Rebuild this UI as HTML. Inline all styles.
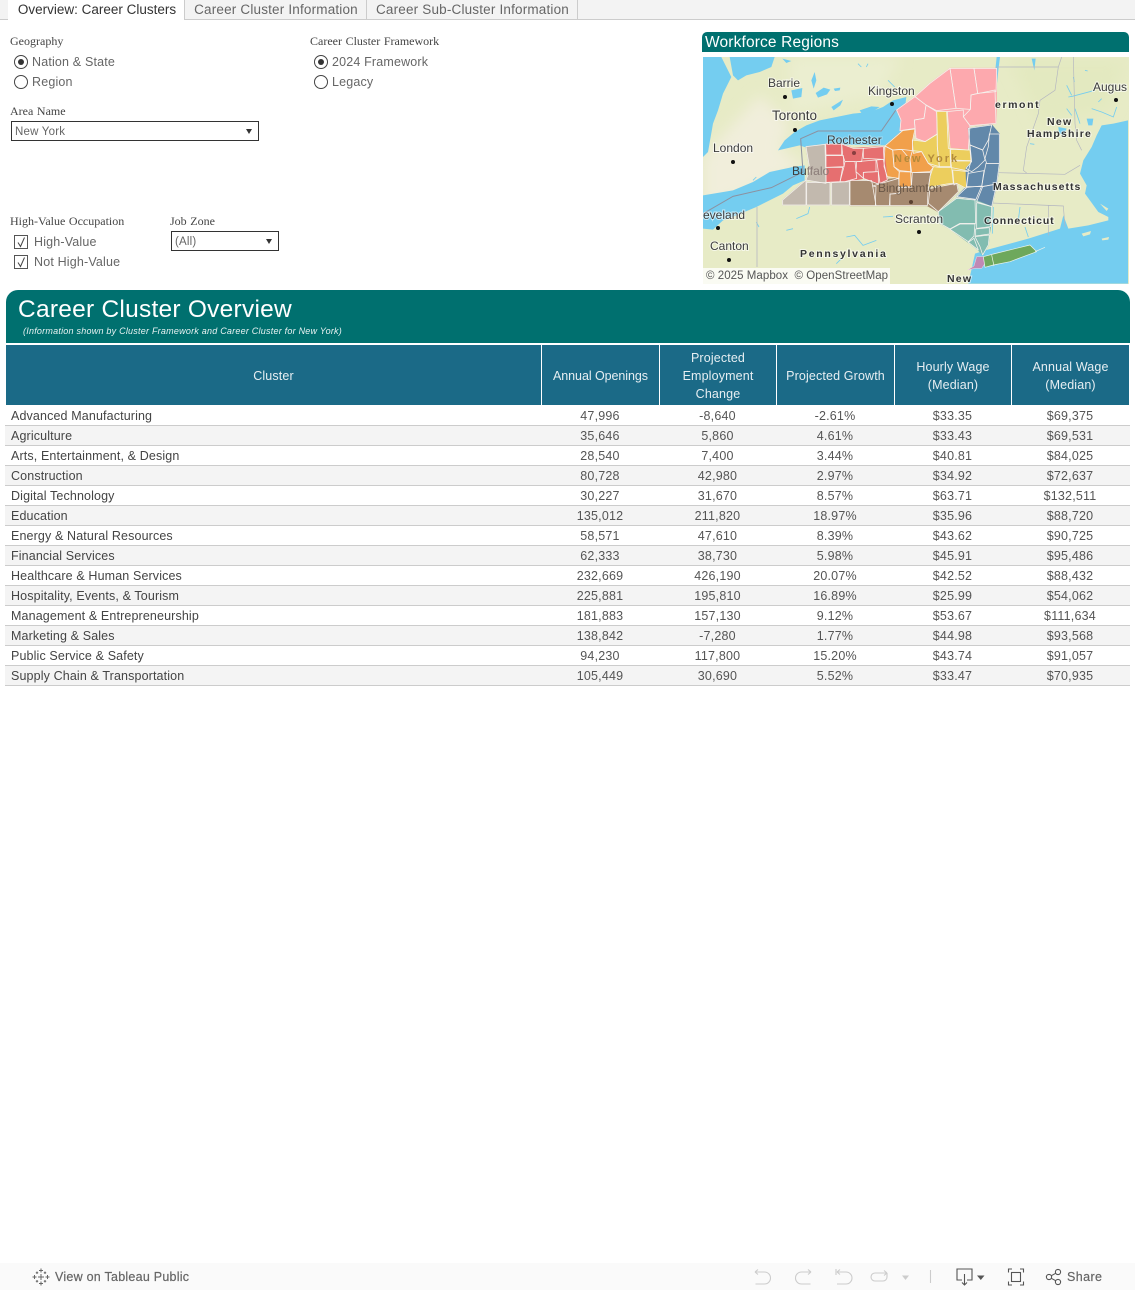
<!DOCTYPE html>
<html><head><meta charset="utf-8"><style>
html,body{margin:0;padding:0;background:#fff}
body{width:1135px;height:1290px;position:relative;overflow:hidden;font-family:"Liberation Sans",sans-serif;color:#555}
.a{position:absolute;white-space:nowrap}
.tab{position:absolute;top:0;height:19px;line-height:19px;font-size:13.5px;color:#666;letter-spacing:.18px;text-align:center;border-right:1px solid #ccc}
.lab{position:absolute;white-space:nowrap;font-family:"Liberation Serif",serif;font-size:12px;color:#444;word-spacing:.6px}
.opt{position:absolute;white-space:nowrap;font-size:12.5px;color:#666;letter-spacing:.17px;line-height:16px}
.radio{position:absolute;width:12px;height:12px;border:1px solid #444;border-radius:50%;background:#fff}
.radio.on::after{content:"";position:absolute;left:3px;top:3px;width:6px;height:6px;border-radius:50%;background:#333}
.check{position:absolute;width:12px;height:12px;border:1px solid #555;background:#fff}
.sel{position:absolute;border:1px solid #333;background:#fff;font-size:11.5px;color:#666;line-height:20px;padding-left:3px;letter-spacing:.2px;box-sizing:border-box;height:20px}
.sel::after{content:"";position:absolute;right:6px;top:7px;border-left:3.5px solid transparent;border-right:3.5px solid transparent;border-top:5px solid #333}
.hc{position:absolute;top:345px;height:60px;padding-top:2px;box-sizing:border-box;background:#1b6a87;color:#e6eef2;font-size:12.5px;letter-spacing:.14px;line-height:18px;text-align:center;display:flex;align-items:center;justify-content:center}
.row{position:absolute;left:5px;width:1125px;height:20px;border-bottom:1px solid #ccc;box-sizing:border-box;font-size:12.5px;line-height:20px;color:#555;letter-spacing:.2px}
.row.e{background:#f4f4f4}
.row span{position:absolute;text-align:center;top:0}
.row .n{left:6px;color:#444;text-align:left;white-space:nowrap;letter-spacing:.13px}
.c1{left:536px;width:118px}.c2{left:654px;width:117px}.c3{left:771px;width:118px}.c4{left:889px;width:117px}.c5{left:1006px;width:118px}
.m{font-family:"Liberation Sans",sans-serif;font-size:12px;fill:#3c3c3c;paint-order:stroke;stroke:#fff;stroke-width:2px;stroke-opacity:.6}
.s{font-family:"Liberation Sans",sans-serif;font-size:10.5px;font-weight:bold;fill:#333;paint-order:stroke;stroke:#fff;stroke-width:2px;stroke-opacity:.6}
</style></head><body>

<div class="a" style="left:0;top:0;width:1135px;height:19px;background:#f3f3f3;border-bottom:1px solid #ccc"></div>
<div class="tab" style="left:8px;width:176px;background:#fff;height:20px;color:#333;letter-spacing:0;text-indent:2px">Overview: Career Clusters</div>
<div class="tab" style="left:185px;width:181px;text-indent:1px">Career Cluster Information</div>
<div class="tab" style="left:367px;width:210px;text-indent:1px">Career Sub-Cluster Information</div>

<div class="lab" style="left:10px;top:34px">Geography</div>
<div class="radio on" style="left:14px;top:55px"></div><div class="opt" style="left:32px;top:54px">Nation &amp; State</div>
<div class="radio" style="left:14px;top:75px"></div><div class="opt" style="left:32px;top:74px">Region</div>
<div class="lab" style="left:310px;top:34px">Career Cluster Framework</div>
<div class="radio on" style="left:314px;top:55px"></div><div class="opt" style="left:332px;top:54px">2024 Framework</div>
<div class="radio" style="left:314px;top:75px"></div><div class="opt" style="left:332px;top:74px">Legacy</div>
<div class="lab" style="left:10px;top:104px">Area Name</div>
<div class="sel" style="left:11px;top:121px;width:248px">New York</div>
<div class="lab" style="left:10px;top:214px">High-Value Occupation</div>
<div class="lab" style="left:170px;top:214px">Job Zone</div>
<div class="check" style="left:14px;top:235px"><svg width="12" height="12" style="display:block"><path d="M3 6.5L5.5 10.5L9.5 1.500" fill="none" stroke="#444"/></svg></div><div class="opt" style="left:34px;top:234px">High-Value</div>
<div class="check" style="left:14px;top:255px"><svg width="12" height="12" style="display:block"><path d="M3 6.5L5.5 10.5L9.5 1.500" fill="none" stroke="#444"/></svg></div><div class="opt" style="left:34px;top:254px">Not High-Value</div>
<div class="sel" style="left:171px;top:231px;width:108px">(All)</div>

<div class="a" style="left:702px;top:32px;width:427px;height:20px;background:#00706f;border-radius:5px 5px 0 0;color:#fff;font-size:15.500px;line-height:21px;letter-spacing:.15px;text-indent:3px">Workforce Regions</div>

<svg class="a" style="left:703px;top:57px" width="426" height="227" viewBox="703 57 426 227">
<defs>
<filter id="b" x="-20%" y="-20%" width="140%" height="140%"><feGaussianBlur stdDeviation="7"/></filter>
<g id="pk"><polygon points="290,150 345,110 378,135 372,175 343,180 345,205 300,212 303,180"/><polygon points="378,135 410,155 412,222 375,245 348,235 343,180 372,175"/><polygon points="345,110 390,70 450,25 468,145 410,152 378,135"/><polygon points="450,25 522,25 533,100 513,105 511,148 468,145"/><polygon points="522,25 590,25 588,95 533,100"/><polygon points="513,105 585,90 588,190 510,197 490,170 511,148"/><polygon points="440,155 490,150 490,170 510,197 505,270 445,265"/></g>
<g id="yl"><polygon points="410,155 442,155 450,265 452,320 418,320 412,260"/><polygon points="337,240 375,245 412,222 412,260 418,320 385,310 365,275 340,280"/><polygon points="452,268 510,270 513,302 452,300"/><polygon points="452,303 513,303 505,333 455,323"/><polygon points="400,320 418,322 455,322 460,370 440,372 385,382 390,350"/><polygon points="458,330 505,335 498,385 470,370 462,375"/></g>
<g id="or"><polygon points="255,258 308,212 345,207 338,240 337,272 305,268 278,270 262,262"/><polygon points="255,258 278,270 282,320 298,335 296,355 262,350 252,320"/><polygon points="278,270 305,268 330,298 332,335 300,332 282,320"/><polygon points="337,272 365,275 385,310 400,322 390,335 335,338 330,298"/><polygon points="298,335 332,336 334,380 296,382"/></g>
<g id="br"><polygon points="150,362 215,362 218,378 228,380 226,437 150,437"/><polygon points="218,378 296,355 298,400 270,402 268,437 228,437"/><polygon points="296,383 334,382 337,338 392,338 384,395 382,437 270,437 270,402 298,400"/><polygon points="390,385 470,370 475,395 415,455 385,430"/></g>
<g id="rd"><polygon points="77,252 125,252 125,285 78,285"/><polygon points="125,252 160,265 190,265 185,305 135,305 128,285"/><polygon points="190,265 250,260 252,298 190,295"/><polygon points="78,287 130,287 132,320 78,322"/><polygon points="78,322 128,322 120,365 78,367"/><polygon points="135,305 165,305 170,355 135,365 120,365 132,320"/><polygon points="170,305 228,300 228,335 190,337 190,355 168,335"/><polygon points="190,337 235,335 235,372 190,355"/><polygon points="230,300 250,298 262,360 240,370"/></g>
<g id="gy"><polygon points="18,260 75,253 78,370 18,360 30,330"/><polygon points="-52,435 -52,420 18,360 18,435"/><polygon points="20,368 90,368 90,435 20,435"/><polygon points="95,368 148,365 148,435 95,435"/></g>
<g id="bl"><polygon points="505,205 575,195 565,240 548,270 510,255"/><polygon points="568,222 598,222 598,310 560,310 555,295 565,260"/><polygon points="510,255 548,270 555,300 535,320 515,335 498,325 515,305"/><polygon points="558,310 598,310 590,372 545,380 552,340"/><polygon points="505,340 552,332 545,380 500,380"/><polygon points="500,382 545,378 528,418 470,410"/><polygon points="548,380 590,372 575,440 530,425"/></g>
<g id="te"><polygon points="415,455 470,415 525,420 527,490 480,490 450,507 420,490"/><polygon points="530,428 575,440 572,500 530,505"/><polygon points="527,507 568,503 568,522 527,528"/><polygon points="450,508 480,492 525,492 522,528 505,545"/><polygon points="525,530 568,525 565,555 548,585 540,560"/><polygon points="505,547 522,535 535,570"/></g>
</defs>
<rect x="703" y="57" width="426" height="227" fill="#e7ebc6"/>

<g filter="url(#b)">
<polygon points="703,157 760,95 790,125 780,150 806,165 720,205 703,205" fill="#f1eedb"/>
<polygon points="790,57 900,57 880,95 790,115" fill="#ebeed0"/>
<polygon points="1010,60 1125,60 1110,110 1040,125" fill="#e3e9c0"/>
</g>

<g transform="translate(703,57) scale(.33333)">
<g fill="#74cdf0">
<polygon points="0,0 55,0 85,60 60,110 45,160 30,200 15,285 0,300"/>
<polygon points="80,0 215,0 205,30 170,45 130,55 105,70 90,55"/>
<polygon points="225,280 245,250 275,225 310,205 350,190 400,180 450,170 500,165 540,150 570,130 610,120 600,200 590,240 545,265 370,262 310,272 290,265"/>
<polygon points="0,415 90,400 150,375 200,345 270,330 305,325 305,370 270,385 240,410 160,450 100,475 60,490 30,518 0,515"/>
<polygon points="265,100 298,93 295,120 270,125"/>
<polygon points="338,108 362,92 382,98 372,112 345,122"/>
<polygon points="392,95 412,92 410,100 396,102"/>
<polygon points="385,150 420,128 412,145 392,160"/>
<polygon points="325,70 335,45 340,70 332,95"/>
<polygon points="470,160 505,148 530,150 500,170 478,172"/>
<polygon points="238,5 265,12 250,18"/>
</g>
<g fill="none" stroke="#74cdf0" stroke-width="2.500">
<path d="M280 485L315 470L320 450M250 520L270 515M160 495L168 510M430 540L455 535L480 565L520 550M540 480L570 478M465 20L475 30M555 70L575 90M495 20L490 30M420 600L400 620M160 360L150 370"/>
</g>
<path d="M0 470L90 418L205 392L300 345L293 245L345 222L535 222L578 160" fill="none" stroke="#8c91a0" stroke-width="3"/>
<path d="M162 450V630" fill="none" stroke="#b8bac0" stroke-width="2.500"/>
</g>

<g transform="translate(985,57) scale(.33333)">
<polygon points="429,190 385,200 350,205 335,235 320,270 295,310 285,350 305,385 300,410 340,465 370,480 370,490 310,505 250,515 235,475 225,515 130,545 0,580 -30,590 -50,680 429,680" fill="#74cdf0"/>
<polygon points="290,530 318,522 315,532 295,538" fill="#e7ebc6"/>
<polygon points="350,545 372,540 370,548 352,550" fill="#e7ebc6"/>
<polygon points="345,440 370,455 365,462" fill="#e7ebc6"/>
<g fill="#74cdf0">
<polygon points="35,0 45,0 40,40 35,90 25,95"/>
<polygon points="140,5 152,5 148,40"/>
<polygon points="305,185 325,185 322,205 310,205"/>
<polygon points="220,210 245,215 235,235 222,228"/>
</g>
<g fill="none" stroke="#74cdf0" stroke-width="2.500">
<path d="M250 120L262 118L330 100M245 85L260 115M245 155L260 175M270 155L285 200M320 155L350 165L385 180L395 150M340 135L350 125M300 40L308 42M265 60L268 75M105 450L100 490M120 510L130 540M135 260L148 262M25 450L22 530"/>
</g>
<path d="M35 30H220L230 0M265 0L270 200L275 250L290 280M220 30L210 100L165 130L160 170L125 270L115 340L125 348M40 347L240 352L285 325M20 438L235 447L240 510M190 445V535" fill="none" stroke="#b4b6c0" stroke-width="2"/>
</g>

<g transform="translate(800,60) scale(.33333)" stroke-linejoin="round">
<g stroke-width="3">
<polygon fill="#fda9ae" stroke="#fda9ae" points="290,150 345,110 390,70 450,25 590,25 588,190 510,197 505,270 445,265 442,155 410,155 412,222 375,245 348,235 345,205 300,212 303,180"/>
<polygon fill="#ecce5d" stroke="#ecce5d" points="337,240 375,245 412,222 410,155 442,155 450,265 510,270 513,302 505,333 498,385 470,370 385,382 390,350 400,320 385,310 365,275 340,280"/>
<polygon fill="#f1a04b" stroke="#f1a04b" points="255,258 308,212 345,207 338,240 340,280 365,275 385,310 400,322 390,335 335,338 334,380 296,382 296,355 262,350 252,320"/>
<polygon fill="#a68a70" stroke="#a68a70" points="150,362 215,362 296,355 296,383 334,382 337,338 392,338 384,390 470,370 475,395 415,455 382,437 150,437"/>
<polygon fill="#e66f70" stroke="#e66f70" points="77,252 125,252 160,265 250,260 262,360 240,370 190,355 135,365 78,367"/>
<polygon fill="#6288aa" stroke="#6288aa" points="505,205 575,195 598,222 598,310 590,372 575,440 530,425 528,418 470,410 500,380 498,325 515,305 510,255"/>
<polygon fill="#82bcb0" stroke="#82bcb0" points="415,455 470,415 525,420 575,440 572,500 568,522 565,555 548,585 535,570 505,547 450,507 420,490"/>
</g>
<use href="#gy" fill="#c2b9ae" stroke="#c2b9ae" stroke-width="3"/>
<g fill="none" stroke="#f5f2ee" stroke-width="2.300">
<use href="#pk"/><use href="#yl"/><use href="#or"/><use href="#br"/><use href="#rd"/><use href="#gy"/><use href="#bl"/><use href="#te"/>
</g>
<polygon fill="#c089b4" stroke="#f0d8e4" stroke-width="1.500" points="503,630 522,618 530,590 550,590 555,610 545,625 525,625"/>
<polygon fill="#6ea85c" stroke="#eef4ea" stroke-width="2" points="550,590 580,582 690,555 710,575 630,605 580,615 555,622"/>
<path d="M575 585L582 618" stroke="#eef4ea" stroke-width="2"/>
<path d="M705 575L735 562" stroke="#f0f3e8" stroke-width="2"/>
</g>

<g fill="#111">
<circle cx="785" cy="97" r="2"/><circle cx="892" cy="104" r="2"/><circle cx="795" cy="130" r="2"/><circle cx="733" cy="162" r="2"/><circle cx="718" cy="228" r="2"/><circle cx="729" cy="260" r="2"/><circle cx="919" cy="232" r="2"/><circle cx="1116" cy="100" r="2"/>
<circle cx="854" cy="153" r="2" fill="#8a3f40"/><circle cx="911" cy="202" r="2" fill="#5a4030"/>
</g>
<text class="m" x="768" y="87">Barrie</text>
<text class="m" x="868" y="95">Kingston</text>
<text class="m" x="772" y="120" style="font-size:13.500px">Toronto</text>
<text class="m" x="713" y="152">London</text>
<text class="m" x="827" y="144" style="stroke-opacity:.3">Rochester</text>
<text class="m" x="792" y="175" style="stroke:none">Bu<tspan fill="#8a7c78">ffalo</tspan></text>
<text class="m" x="878" y="192" style="stroke:none;fill:#6a5848">Binghamton</text>
<text class="m" x="895" y="223">Scranton</text>
<text class="m" x="703" y="219">eveland</text>
<text class="m" x="710" y="250">Canton</text>
<text class="m" x="1093" y="91">Augus</text>
<text class="s" x="894" y="162" style="stroke:none;fill:#b28a3c;letter-spacing:2px;font-size:11px">New York</text>
<text class="s" x="800" y="257" style="letter-spacing:1.700px">Pennsylvania</text>
<text class="s" x="995" y="108" style="letter-spacing:1.600px">ermont</text>
<text class="s" x="1047" y="125" style="letter-spacing:1.300px">New</text>
<text class="s" x="1027" y="137" style="letter-spacing:1.200px">Hampshire</text>
<text class="s" x="993" y="190" style="letter-spacing:1px">Massachusetts</text>
<text class="s" x="984" y="224" style="letter-spacing:.9px">Connecticut</text>
<text class="s" x="947" y="282" style="letter-spacing:1.200px">New</text>
<rect x="703" y="268" width="187" height="16" fill="#fff" opacity=".78"/>
<text x="706" y="279" font-family="Liberation Sans" font-size="11.500" fill="#555" letter-spacing=".05" xml:space="preserve">© 2025 Mapbox  © OpenStreetMap</text>
</svg>

<div class="a" style="left:6px;top:290px;width:1124px;height:53px;background:#00706f;border-radius:12px 12px 0 0"></div>
<div class="a" style="left:18px;top:295px;color:#fff;font-size:24.500px;line-height:30px;letter-spacing:.25px">Career Cluster Overview</div>
<div class="a" style="left:23px;top:325px;color:#e8f2f2;font-size:9px;font-style:italic;line-height:12px;letter-spacing:.23px">(Information shown by Cluster Framework and Career Cluster for New York)</div>

<div class="hc" style="left:6px;width:535px">Cluster</div>
<div class="hc" style="left:542px;width:117px;letter-spacing:-.06px">Annual Openings</div>
<div class="hc" style="left:660px;width:116px">Projected<br>Employment<br>Change</div>
<div class="hc" style="left:777px;width:117px">Projected Growth</div>
<div class="hc" style="left:895px;width:116px">Hourly Wage<br>(Median)</div>
<div class="hc" style="left:1012px;width:117px">Annual Wage<br>(Median)</div>

<div class="row" style="top:406px"><span class="n">Advanced Manufacturing</span><span class="c1">47,996</span><span class="c2">-8,640</span><span class="c3">-2.61%</span><span class="c4">$33.35</span><span class="c5">$69,375</span></div>
<div class="row e" style="top:426px"><span class="n">Agriculture</span><span class="c1">35,646</span><span class="c2">5,860</span><span class="c3">4.61%</span><span class="c4">$33.43</span><span class="c5">$69,531</span></div>
<div class="row" style="top:446px"><span class="n">Arts, Entertainment, &amp; Design</span><span class="c1">28,540</span><span class="c2">7,400</span><span class="c3">3.44%</span><span class="c4">$40.81</span><span class="c5">$84,025</span></div>
<div class="row e" style="top:466px"><span class="n">Construction</span><span class="c1">80,728</span><span class="c2">42,980</span><span class="c3">2.97%</span><span class="c4">$34.92</span><span class="c5">$72,637</span></div>
<div class="row" style="top:486px"><span class="n">Digital Technology</span><span class="c1">30,227</span><span class="c2">31,670</span><span class="c3">8.57%</span><span class="c4">$63.71</span><span class="c5">$132,511</span></div>
<div class="row e" style="top:506px"><span class="n">Education</span><span class="c1">135,012</span><span class="c2">211,820</span><span class="c3">18.97%</span><span class="c4">$35.96</span><span class="c5">$88,720</span></div>
<div class="row" style="top:526px"><span class="n">Energy &amp; Natural Resources</span><span class="c1">58,571</span><span class="c2">47,610</span><span class="c3">8.39%</span><span class="c4">$43.62</span><span class="c5">$90,725</span></div>
<div class="row e" style="top:546px"><span class="n">Financial Services</span><span class="c1">62,333</span><span class="c2">38,730</span><span class="c3">5.98%</span><span class="c4">$45.91</span><span class="c5">$95,486</span></div>
<div class="row" style="top:566px"><span class="n">Healthcare &amp; Human Services</span><span class="c1">232,669</span><span class="c2">426,190</span><span class="c3">20.07%</span><span class="c4">$42.52</span><span class="c5">$88,432</span></div>
<div class="row e" style="top:586px"><span class="n">Hospitality, Events, &amp; Tourism</span><span class="c1">225,881</span><span class="c2">195,810</span><span class="c3">16.89%</span><span class="c4">$25.99</span><span class="c5">$54,062</span></div>
<div class="row" style="top:606px"><span class="n">Management &amp; Entrepreneurship</span><span class="c1">181,883</span><span class="c2">157,130</span><span class="c3">9.12%</span><span class="c4">$53.67</span><span class="c5">$111,634</span></div>
<div class="row e" style="top:626px"><span class="n">Marketing &amp; Sales</span><span class="c1">138,842</span><span class="c2">-7,280</span><span class="c3">1.77%</span><span class="c4">$44.98</span><span class="c5">$93,568</span></div>
<div class="row" style="top:646px"><span class="n">Public Service &amp; Safety</span><span class="c1">94,230</span><span class="c2">117,800</span><span class="c3">15.20%</span><span class="c4">$43.74</span><span class="c5">$91,057</span></div>
<div class="row e" style="top:666px"><span class="n">Supply Chain &amp; Transportation</span><span class="c1">105,449</span><span class="c2">30,690</span><span class="c3">5.52%</span><span class="c4">$33.47</span><span class="c5">$70,935</span></div>

<div class="a" style="left:0;top:1263px;width:1135px;height:27px;background:#fafafa"></div>
<svg class="a" style="left:32px;top:1268px" width="18" height="18" viewBox="0 0 18 18" fill="none" stroke="#666" stroke-width="1">
<path d="M9 .5v4M7 2.500h4M9 13.500v4M7 15.500h4M.5 9h4M2.500 7v4M13.500 9h4M15.500 7v4M5 3.500v2.500M3.800 4.800h2.400M13 3.500v2.500M11.800 4.800h2.400M5 12v2.500M3.800 13.200h2.400M13 12v2.500M11.800 13.200h2.400M9 6v6M6 9h6"/></svg>
<div class="a" style="left:55px;top:1269px;font-size:12.500px;color:#666;line-height:16px;letter-spacing:.25px;-webkit-text-stroke:.2px #666">View on Tableau Public</div>
<svg class="a" style="left:750px;top:1264px" width="385" height="26" viewBox="750 1264 385 26" fill="none" stroke="#ccc" stroke-width="1.100">
<path d="M755 1272h9.500a6 6 0 0 1 0 12h-9M755 1272l3-2.500M755 1272l3 2.500"/>
<path d="M811 1272h-9.500a6 6 0 0 0 0 12h9M811 1272l-3-2.500M811 1272l-3 2.500"/>
<path d="M836 1269v6M837 1272h9a6 6 0 0 1 0 12h-9M837 1272l3-2.500M837 1272l3 2.500"/>
<path d="M887 1273h-12a4 4 0 0 0 0 8h8a4 4 0 0 0 4-4v-4M887 1273l-3-2.500M887 1273l-3 2.500"/>
<path d="M902 1275.500h7l-3.500 4.500z" fill="#ccc" stroke="none"/>
<path d="M930.500 1270v13"/>
<g stroke="#555"><path d="M962 1280h-5v-11h15v11h-5M964.500 1274v11M962 1282.500l2.500 2.500 2.500-2.500"/>
<path d="M1012 1269h-3.500v3.500M1020 1269h3.500v3.500M1012 1285h-3.500v-3.500M1020 1285h3.500v-3.500"/><rect x="1011.500" y="1272.500" width="9" height="9"/>
<circle cx="1049" cy="1277" r="2.600"/><circle cx="1058" cy="1272" r="2.600"/><circle cx="1058" cy="1282" r="2.600"/><path d="M1051.300 1275.700l4.400-2.400M1051.300 1278.300l4.400 2.400"/></g>
<path d="M977 1275.500h7.500l-3.700 4.500z" fill="#555" stroke="none"/>
</svg>
<div class="a" style="left:1067px;top:1269px;font-size:12.500px;color:#666;line-height:16px;letter-spacing:.4px;-webkit-text-stroke:.2px #666">Share</div>
</body></html>
